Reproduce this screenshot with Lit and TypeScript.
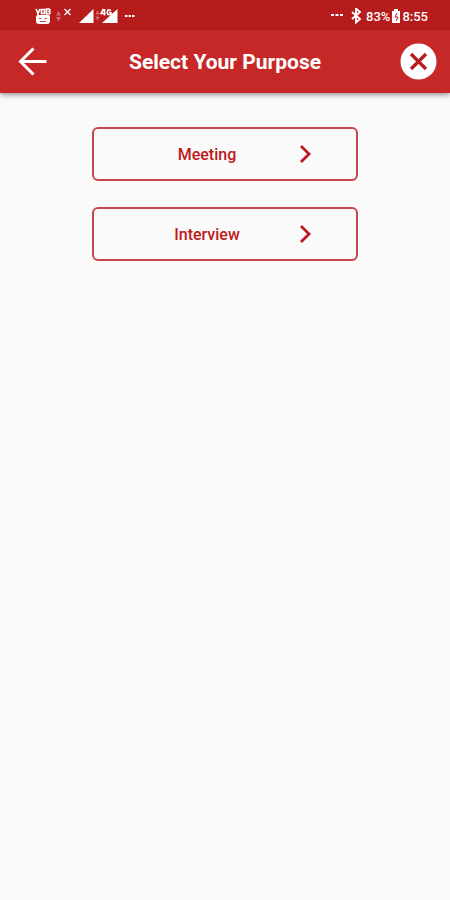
import { LitElement, html, css } from "lit";
import { customElement, property } from "lit/decorators.js";

@customElement("status-bar")
class StatusBar extends LitElement {
  static styles = css`
    :host {
      display: flex;
      justify-content: space-between;
      align-items: center;
      height: 30px;
      padding: 4px 22px 0 34px;
      box-sizing: border-box;
      background: #b71c1c;
      color: #fff;
      font: 500 13px/16px Roboto, sans-serif;
    }
    svg {
      display: block;
    }
    .side {
      display: flex;
      align-items: center;
    }
    .level {
      margin-left: 2px;
    }
  `;

  render() {
    return html`
      <div class="side">
        <svg width="102" height="18" viewBox="0 0 102 18" fill="#fff" aria-label="Network status">
          <path d="M2 1l2 4.500L6 1M4 5v2M7.500 1.500h3v4h-3zM12.500 1v5h2.500q2-1 0-2.500q2-1 0-2.500z" fill="none" stroke="#fff" stroke-width="1.700" />
          <path d="M4 7h10q2 0 2 2v4q0 3-3 3H5q-3 0-3-3V9q0-2 2-2z" />
          <path d="M5 10.500h2.500M10.500 10.500H13M6 13.500h6" stroke="#c95050" stroke-width="1.200" />
          <path d="M24.500 3l2.500 4.500h-5zM24.500 13.500l2.500-4.500h-5z" opacity=".35" />
          <path d="M30.500 1l6 6M36.500 1l-6 6" stroke="#fff" stroke-width="1.300" />
          <path d="M59.500 1v14H45z" />
          <path d="M63.500 2l2 4.500h-4zM63.500 13l2-4.500h-4z" opacity=".35" />
          <path d="M83.500 1v14H68z" />
          <path d="M69.500 1L67 5.500h4.500M70.500 1v6.500M77 2h-3q-1.500 2.500 0 4.500h3V4.500h-2" fill="none" stroke="#fff" stroke-width="1.600" />
          <path d="M91 7h2.500v2H91zM94.500 7H97v2h-2.500zM98 7h2.500v2H98z" />
        </svg>
      </div>
      <div class="side">
        <svg width="34" height="18" viewBox="0 0 34 18" fill="#fff" aria-label="Bluetooth on">
          <path d="M1 6h3v2H1zM5.500 6h3v2h-3zM10 6h3v2h-3z" />
          <path d="M22 4l8 7-4 3.500V.5L30 4l-8 7" fill="none" stroke="#fff" stroke-width="1.900" />
        </svg>
        <span class="level">83%</span>
        <svg width="12" height="18" viewBox="0 0 12 18" aria-label="Charging">
          <path d="M4 1h4v2h2v12H2V3h2z" fill="#fff" />
          <path d="M7 5L5 9h3l-2 4" fill="none" stroke="#b71c1c" stroke-width="1" />
        </svg>
        <span>8:55</span>
      </div>
    `;
  }
}

@customElement("purpose-option")
class PurposeOption extends LitElement {
  @property() label = "";

  static styles = css`
    :host {
      display: block;
    }
    .option {
      display: flex;
      align-items: center;
      width: 100%;
      height: 54px;
      padding: 2px 42px 0 22px;
      box-sizing: border-box;
      border: 2px solid #c4474b;
      border-radius: 6px;
      background: #fafafa;
      color: #c01820;
      font: 500 16px/20px Roboto, sans-serif;
      cursor: pointer;
    }
    .label {
      flex: 1;
      text-align: center;
    }
    svg {
      display: block;
    }
  `;

  render() {
    return html`
      <button class="option" type="button">
        <span class="label">${this.label}</span>
        <svg width="16" height="20" viewBox="0 0 16 20" aria-hidden="true">
          <path d="M3 1L11 9L3 17" fill="none" stroke="#c01820" stroke-width="2.800" />
        </svg>
      </button>
    `;
  }
}

@customElement("app-root")
class AppRoot extends LitElement {
  static styles = css`
    :host {
      display: flex;
      flex-direction: column;
      min-height: 100vh;
      background: #fafafa;
      font-family: Roboto, sans-serif;
    }
    .bar {
      display: flex;
      align-items: center;
      justify-content: space-between;
      height: 63px;
      padding: 0 12px;
      box-sizing: border-box;
      background: #c62828;
      box-shadow: 0 2px 5px rgba(0, 0, 0, 0.4);
    }
    h1 {
      margin: 0;
      color: #fff;
      font-size: 21px;
      line-height: 28px;
      font-weight: 700;
    }
    .icon {
      display: flex;
      padding: 0;
      border: 0;
      background: none;
      cursor: pointer;
    }
    .options {
      display: flex;
      flex-direction: column;
      gap: 26px;
      width: 59%;
      margin: 34px auto;
    }
  `;

  render() {
    return html`
      <status-bar></status-bar>
      <header class="bar">
        <button class="icon" type="button" aria-label="Back">
          <svg width="40" height="40" viewBox="0 0 40 40" fill="none" stroke="#fff" stroke-width="3">
            <path d="M34.500 19.500H8M21.500 6.500L8.500 19.500L21.500 32.500" />
          </svg>
        </button>
        <h1>Select Your Purpose</h1>
        <button class="icon" type="button" aria-label="Close">
          <svg width="40" height="40" viewBox="0 0 40 40">
            <circle cx="20.500" cy="19.500" r="18" fill="#fff" />
            <path d="M13 12l15 15M28 12L13 27" stroke="#b71c1c" stroke-width="3.200" />
          </svg>
        </button>
      </header>
      <main class="options">
        <purpose-option label="Meeting"></purpose-option>
        <purpose-option label="Interview"></purpose-option>
      </main>
    `;
  }
}
